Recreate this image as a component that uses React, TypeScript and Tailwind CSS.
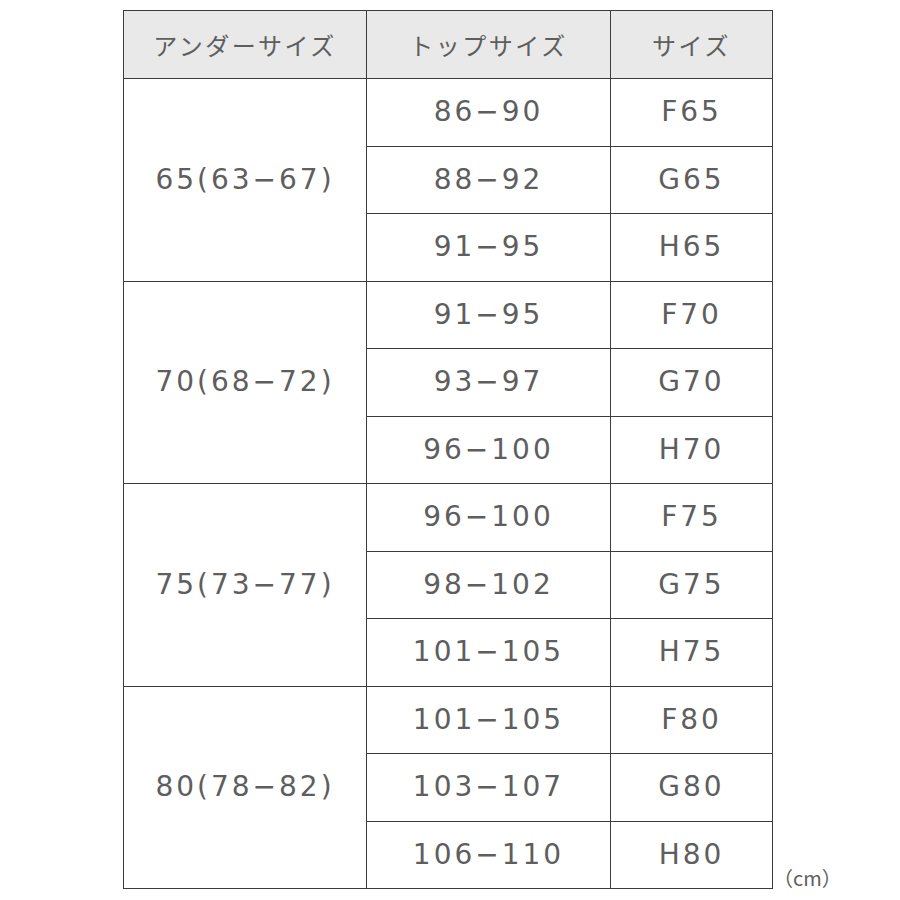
import React from 'react';

const groups = [
  { under: '65(63−67)', rows: [['86−90', 'F65'], ['88−92', 'G65'], ['91−95', 'H65']] },
  { under: '70(68−72)', rows: [['91−95', 'F70'], ['93−97', 'G70'], ['96−100', 'H70']] },
  { under: '75(73−77)', rows: [['96−100', 'F75'], ['98−102', 'G75'], ['101−105', 'H75']] },
  { under: '80(78−82)', rows: [['101−105', 'F80'], ['103−107', 'G80'], ['106−110', 'H80']] },
];

const cell = 'border border-[#3c3c3c] text-center align-middle';
const num = "font-['DejaVu_Sans',Verdana,sans-serif] text-[28px] tracking-[3px] text-[#5e5e5e]";

export default function App() {
  return (
    <div className="w-[900px] h-[900px] bg-white">
      <div className="flex items-end pt-[10px] pl-[123px]">
        <table className="border-collapse table-fixed w-[649px]">
          <colgroup>
            <col className="w-[243px]" />
            <col className="w-[244px]" />
            <col className="w-[162px]" />
          </colgroup>
          <thead>
            <tr className="h-[68px] bg-[#e9e9e9]">
              {['アンダーサイズ', 'トップサイズ', 'サイズ'].map((h) => (
                <th
                  key={h}
                  className={`${cell} font-normal font-['Noto_Sans_CJK_JP','Noto_Sans',sans-serif] text-[24px] tracking-[2.5px] text-[#5e5e5e]`}
                >
                  {h}
                </th>
              ))}
            </tr>
          </thead>
          <tbody>
            {groups.map((g) =>
              g.rows.map((r, i) => (
                <tr key={r[1]} className="h-[67.5px]">
                  {i === 0 && (
                    <td rowSpan={3} className={`${cell} ${num}`}>
                      {g.under}
                    </td>
                  )}
                  <td className={`${cell} ${num}`}>{r[0]}</td>
                  <td className={`${cell} ${num}`}>{r[1]}</td>
                </tr>
              ))
            )}
          </tbody>
        </table>
        <span className="mb-[1px] font-['Noto_Sans_CJK_JP',sans-serif] text-[20px] leading-none text-[#5e5e5e]">
          （cm）
        </span>
      </div>
    </div>
  );
}
